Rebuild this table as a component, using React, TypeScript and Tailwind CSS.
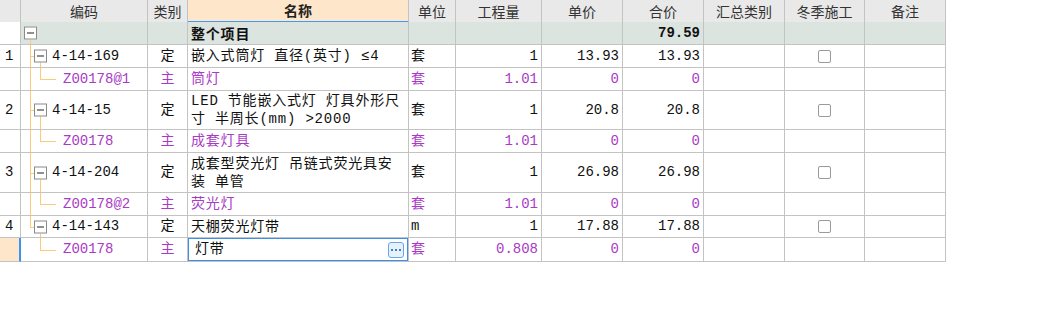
import React from "react";

const COLS =
  "grid grid-cols-[21px_127px_40px_221px_47px_86px_81px_81px_81px_80px_81px] w-[946px]";
const CELL = "border-r border-b border-[#c3c3c3] flex items-center overflow-hidden whitespace-nowrap";
const ORANGE = "bg-[#ffc97a]";
const PURPLE = "text-[#a93ac6]";

type Row = {
  kind: "parent" | "child";
  num?: string;
  code: string;
  cat: string;
  name: string[];
  unit: string;
  qty: string;
  price: string;
  total: string;
  h: string;
  last?: boolean;
  edit?: boolean;
};

const rows: Row[] = [
  { kind: "parent", num: "1", code: "4-14-169", cat: "定", name: ["嵌入式筒灯 直径(英寸) ≤4"], unit: "套", qty: "1", price: "13.93", total: "13.93", h: "h-[23px]" },
  { kind: "child", code: "Z00178@1", cat: "主", name: ["筒灯"], unit: "套", qty: "1.01", price: "0", total: "0", h: "h-[23px]" },
  { kind: "parent", num: "2", code: "4-14-15", cat: "定", name: ["LED 节能嵌入式灯 灯具外形尺", "寸 半周长(mm) >2000"], unit: "套", qty: "1", price: "20.8", total: "20.8", h: "h-[39px]" },
  { kind: "child", code: "Z00178", cat: "主", name: ["成套灯具"], unit: "套", qty: "1.01", price: "0", total: "0", h: "h-[23px]" },
  { kind: "parent", num: "3", code: "4-14-204", cat: "定", name: ["成套型荧光灯 吊链式荧光具安", "装 单管"], unit: "套", qty: "1", price: "26.98", total: "26.98", h: "h-[40px]" },
  { kind: "child", code: "Z00178@2", cat: "主", name: ["荧光灯"], unit: "套", qty: "1.01", price: "0", total: "0", h: "h-[23px]" },
  { kind: "parent", num: "4", code: "4-14-143", cat: "定", name: ["天棚荧光灯带"], unit: "m", qty: "1", price: "17.88", total: "17.88", h: "h-[22px]", last: true },
  { kind: "child", code: "Z00178", cat: "主", name: ["灯带"], unit: "套", qty: "0.808", price: "0", total: "0", h: "h-[23px]", last: true, edit: true },
];

function MinusBox({ className }: { className: string }) {
  return (
    <div className={`absolute w-[13px] h-[13px] border border-[#8a8a8a] bg-white flex items-center justify-center ${className}`}>
      <div className="w-[7px] h-[1px] bg-[#222]" />
    </div>
  );
}

function CodeCell({ r }: { r: Row }) {
  if (r.kind === "parent") {
    return (
      <div className={`${CELL} relative pl-[31px]`}>
        {r.last ? (
          <div className={`absolute left-[9px] top-0 h-1/2 w-px ${ORANGE}`} />
        ) : (
          <div className={`absolute left-[9px] top-0 bottom-0 w-px ${ORANGE}`} />
        )}
        <div className={`absolute left-[9px] top-1/2 w-[5px] h-px ${ORANGE}`} />
        <div className={`absolute left-[19px] top-1/2 bottom-0 w-px ${ORANGE}`} />
        <MinusBox className="left-[13px] top-1/2 -translate-y-1/2" />
        <span className="relative">{r.code}</span>
      </div>
    );
  }
  return (
    <div className={`${CELL} relative pl-[42px] ${PURPLE}`}>
      {!r.last && <div className={`absolute left-[9px] top-0 bottom-0 w-px ${ORANGE}`} />}
      <div className={`absolute left-[19px] top-0 h-1/2 w-px ${ORANGE}`} />
      <div className={`absolute left-[19px] top-1/2 w-[16px] h-px ${ORANGE}`} />
      <span className="relative">{r.code}</span>
    </div>
  );
}

function Check() {
  return <div className="w-[13px] h-[13px] border border-[#9a9a9a] rounded-[2px] bg-white" />;
}

function DataRow({ r }: { r: Row }) {
  const child = r.kind === "child";
  const color = child ? PURPLE : "text-[#111]";
  return (
    <div className={`${COLS} ${r.h}`}>
      {r.edit ? (
        <div className="border-r-2 border-r-[#3d94f0] border-b border-b-[#c3c3c3] bg-[#fde6c9]" />
      ) : (
        <div className={`${CELL} pl-[5px]`}>{r.num ?? ""}</div>
      )}
      <CodeCell r={r} />
      <div className={`${CELL} justify-center ${color}`}>{r.cat}</div>
      {r.edit ? (
        <div className="border-b border-r border-[#c3c3c3] flex">
          <div className="flex-1 border border-[#3d8ee8] flex items-center pl-[6px] pr-[3px] justify-between text-[#111]">
            <span className="tracking-[0.8px]">{r.name[0]}</span>
            <div className="w-[16px] h-[16px] rounded-[3px] border border-[#6aa6e6] bg-[#e6f1fc] flex items-center justify-center gap-[2px]">
              <div className="w-[2px] h-[2px] bg-[#3d7fc4]" />
              <div className="w-[2px] h-[2px] bg-[#3d7fc4]" />
              <div className="w-[2px] h-[2px] bg-[#3d7fc4]" />
            </div>
          </div>
        </div>
      ) : (
        <div className={`${CELL} pl-[3px] ${color}`}>
          <div className="flex flex-col leading-[18px] tracking-[0.8px]">
            {r.name.map((t, i) => (
              <span key={i} className="whitespace-pre">{t}</span>
            ))}
          </div>
        </div>
      )}
      <div className={`${CELL} pl-[2px] ${color}`}>{r.unit}</div>
      <div className={`${CELL} justify-end pr-[3px] ${color}`}>{r.qty}</div>
      <div className={`${CELL} justify-end pr-[3px] ${color}`}>{r.price}</div>
      <div className={`${CELL} justify-end pr-[3px] ${color}`}>{r.total}</div>
      <div className={CELL} />
      <div className={`${CELL} justify-center`}>{child ? null : <Check />}</div>
      <div className={CELL} />
    </div>
  );
}

export default function App() {
  const headers = ["", "编码", "类别", "名称", "单位", "工程量", "单价", "合价", "汇总类别", "冬季施工", "备注"];
  return (
    <div className="w-[1050px] h-[325px] bg-white font-['Liberation_Mono','Noto_Sans_CJK_SC',monospace] text-[14px] text-[#111] overflow-hidden">
      <div className={`${COLS} h-[22px] bg-[#e9e9e9] font-['Noto_Sans_CJK_SC',sans-serif] text-[#333]`}>
        {headers.map((h, i) =>
          i === 3 ? (
            <div key={i} className="border-r border-[#c3c3c3] border-b-2 border-b-[#3d9bf5] bg-[#fde6c9] flex items-center justify-center font-bold text-[#222]">
              {h}
            </div>
          ) : (
            <div key={i} className={`${CELL} justify-center`}>{h}</div>
          )
        )}
      </div>
      <div className={`${COLS} h-[23px]`}>
        <div className={`${CELL} bg-white`} />
        <div className={`${CELL} relative bg-[#dce4df]`}>
          <div className={`absolute left-[9px] top-1/2 bottom-0 w-px ${ORANGE}`} />
          <MinusBox className="left-[3px] top-1/2 -translate-y-1/2" />
        </div>
        <div className={`${CELL} bg-[#dce4df]`} />
        <div className={`${CELL} bg-[#dce4df] pl-[3px] font-bold tracking-[0.8px] font-['Noto_Sans_CJK_SC',sans-serif]`}>整个项目</div>
        <div className={`${CELL} bg-[#dce4df]`} />
        <div className={`${CELL} bg-[#dce4df]`} />
        <div className={`${CELL} bg-[#dce4df]`} />
        <div className={`${CELL} bg-[#dce4df] justify-end pr-[3px] font-bold`}>79.59</div>
        <div className={`${CELL} bg-[#dce4df]`} />
        <div className={`${CELL} bg-[#dce4df]`} />
        <div className={`${CELL} bg-[#dce4df]`} />
      </div>
      {rows.map((r, i) => (
        <DataRow key={i} r={r} />
      ))}
    </div>
  );
}
